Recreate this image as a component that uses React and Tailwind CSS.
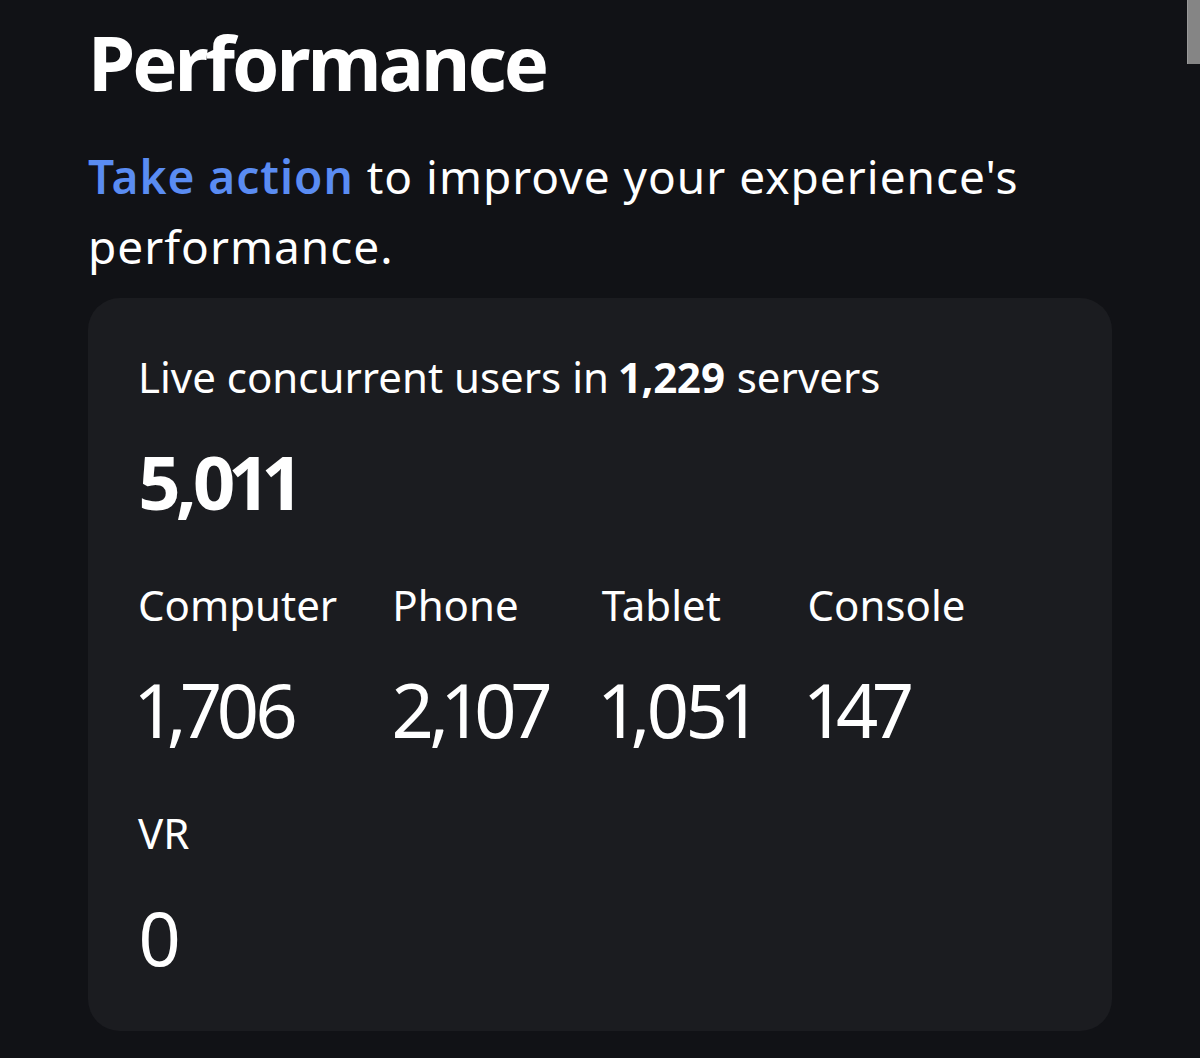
import React from "react";

const stats = [
  { label: "Computer", value: "1,706" },
  { label: "Phone", value: "2,107" },
  { label: "Tablet", value: "1,051" },
  { label: "Console", value: "147" },
  { label: "VR", value: "0" },
];

export default function App() {
  return (
    <div
      className="relative min-h-[1058px] w-full bg-[#111216] text-white overflow-hidden proportional-nums"
      style={{ fontFamily: '"Noto Sans", "Open Sans", sans-serif' }}
    >
      <div className="absolute right-0 top-0 h-[64px] w-[13px] bg-[#858585] border-l border-[#9a9a9a]" />
      <div className="ml-[88px] w-[1024px] pt-[24px]">
        <h1 className="text-[76px] leading-[76px] font-bold tracking-[-3px]">Performance</h1>
        <p className="mt-[41px] text-[46px] leading-[70px] font-normal tracking-[1px]">
          <span className="text-[#5a8cf2] font-semibold">Take action</span> to improve your experience's
          <br />
          performance.
        </p>
        <div className="mt-[17px] rounded-[32px] bg-[#1b1c20] pl-[50px] pr-[60px] pt-[50px] pb-[56px]">
          <div className="text-[42px] leading-[58px]">
            Live concurrent users in <span className="font-bold">1,229</span> servers
          </div>
          <div className="mt-[39px] text-[74px] leading-[74px] font-bold tracking-[-5px]">5,011</div>
          <div className="mt-[57px] flex flex-wrap gap-x-[55px] gap-y-[57px]">
            {stats.map((s) => (
              <div key={s.label} className="flex flex-col">
                <div className="text-[42px] leading-[58px]">{s.label}</div>
                <div className="mt-[39px] text-[74px] leading-[74px] tracking-[-4px]">{s.value}</div>
              </div>
            ))}
          </div>
        </div>
      </div>
    </div>
  );
}
